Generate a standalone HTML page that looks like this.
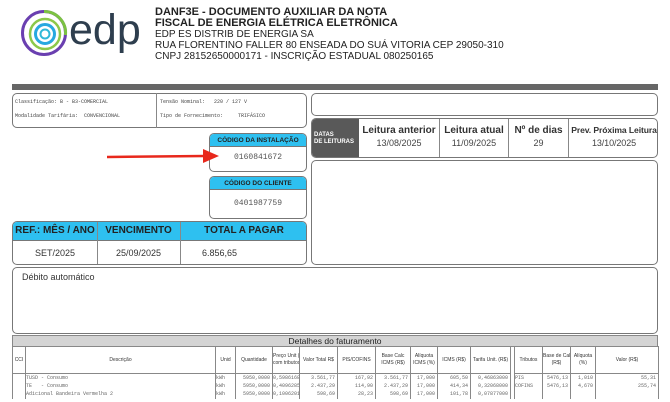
<!DOCTYPE html>
<html><head><meta charset="utf-8"><style>
*{margin:0;padding:0;box-sizing:border-box}
body{width:670px;height:402px;overflow:hidden;background:#fff;font-family:"Liberation Sans",sans-serif;color:#333;position:relative}
.a{position:absolute}
.box{position:absolute;border:1px solid #777;border-radius:5px}
.mono{font-family:"Liberation Mono",monospace}
.blue{background:#2ec0f0}
table{border-collapse:collapse;table-layout:fixed;position:absolute;left:12px;top:346px;width:646px}
td{border:1px solid #888;font-size:5px;text-align:center;overflow:hidden;white-space:nowrap;line-height:7px}
.r td{font-family:"Liberation Mono",monospace;font-size:5px;color:#666;height:8.5px;text-align:right;padding-right:2px;border-top:none;border-bottom:none}
</style></head><body>
<svg class="a" style="left:20px;top:9px" width="48" height="48" viewBox="0 0 48 48">
<circle cx="24" cy="24" r="21.5" fill="none" stroke="#6a3fb0" stroke-width="3"/>
<path d="M24 2.5 A21.5 21.5 0 0 1 45.5 26" fill="none" stroke="#7cc242" stroke-width="3"/>
<circle cx="25" cy="25" r="15" fill="none" stroke="#8cc84a" stroke-width="2.5"/>
<circle cx="25" cy="25" r="9.5" fill="none" stroke="#28a8e0" stroke-width="3"/>
<circle cx="25" cy="25" r="4.5" fill="none" stroke="#30b8d8" stroke-width="2"/>
</svg>
<div class="a" style="left:69px;top:9px;font-size:43px;line-height:43px;color:#2e3e4e;letter-spacing:0px">edp</div>
<div class="a" style="left:155px;top:7px;font-size:11px;line-height:11px;color:#222">
<b>DANF3E - DOCUMENTO AUXILIAR DA NOTA</b><br><b>FISCAL DE ENERGIA ELÉTRICA ELETRÔNICA</b><br>
<span style="font-size:10px">EDP ES DISTRIB DE ENERGIA SA<br>RUA FLORENTINO FALLER 80 ENSEADA DO SUÁ VITORIA CEP 29050-310<br>CNPJ 28152650000171 - INSCRIÇÃO ESTADUAL 080250165</span></div>
<div class="a" style="left:12px;top:84px;width:646px;height:6px;background:#666"></div>
<div class="box" style="left:12px;top:93px;width:295px;height:35px"></div>
<div class="a" style="left:156px;top:93px;width:1px;height:35px;background:#888"></div>
<div class="a mono" style="left:15px;top:99px;font-size:5px;color:#444">Classificação: B - B3-COMERCIAL</div>
<div class="a mono" style="left:15px;top:113px;font-size:5px;color:#444">Modalidade Tarifária:&nbsp;&nbsp;CONVENCIONAL</div>
<div class="a mono" style="left:160px;top:99px;font-size:5px;color:#444">Tensão Nominal:&nbsp;&nbsp;&nbsp;220 / 127 V</div>
<div class="a mono" style="left:160px;top:113px;font-size:5px;color:#444">Tipo de Fornecimento:&nbsp;&nbsp;&nbsp;&nbsp;&nbsp;TRIFÁSICO</div>
<div class="box" style="left:311px;top:93px;width:347px;height:23px"></div>
<div class="box" style="left:311px;top:118px;width:347px;height:40px;overflow:hidden;white-space:nowrap">
<div class="a" style="left:0;top:0;width:47px;height:40px;background:#595959;color:#fff;font-size:6px;font-weight:bold;padding:13px 0 0 2px;line-height:7px">DATAS<br>DE LEITURAS</div>
<div class="a" style="left:47px;width:80px;top:0;padding-top:5px;text-align:center;font-size:10px;font-weight:bold;line-height:13px">Leitura anterior<br><span style="font-weight:normal;font-size:9px;color:#444">13/08/2025</span></div>
<div class="a" style="left:127px;width:69px;text-align:center;font-size:10px;font-weight:bold;line-height:13px;border-left:1px solid #888;height:40px;top:0;padding-top:5px">Leitura atual<br><span style="font-weight:normal;font-size:9px;color:#444">11/09/2025</span></div>
<div class="a" style="left:196px;width:60px;text-align:center;font-size:10px;font-weight:bold;line-height:13px;border-left:1px solid #888;height:40px;top:0;padding-top:5px">Nº de dias<br><span style="font-weight:normal;font-size:9px;color:#444">29</span></div>
<div class="a" style="left:256px;width:91px;text-align:center;font-size:8.6px;font-weight:bold;line-height:13px;border-left:1px solid #888;height:40px;top:0;padding-top:5px;letter-spacing:-0.1px">Prev. Próxima Leitura<br><span style="font-weight:normal;font-size:9px;color:#444">13/10/2025</span></div>
</div>
<div class="box" style="left:311px;top:160px;width:347px;height:105px"></div>
<div class="box" style="left:209px;top:133px;width:98px;height:39px;overflow:hidden"><div class="blue" style="height:13px;border-bottom:1px solid #777;font-size:6.5px;font-weight:bold;text-align:center;line-height:13px;color:#222">CÓDIGO DA INSTALAÇÃO</div><div class="mono" style="text-align:center;font-size:8px;margin-top:6px;color:#555">0160841672</div></div>
<div class="box" style="left:209px;top:176px;width:98px;height:43px;overflow:hidden"><div class="blue" style="height:13px;border-bottom:1px solid #777;font-size:6.5px;font-weight:bold;text-align:center;line-height:13px;color:#222">CÓDIGO DO CLIENTE</div><div class="mono" style="text-align:center;font-size:8px;margin-top:9px;color:#555">0401987759</div></div>
<svg class="a" style="left:105px;top:148px" width="115" height="18"><line x1="2" y1="9" x2="100" y2="8" stroke="#e8281c" stroke-width="2.5"/><polygon points="98,1 114,8 98,15" fill="#e8281c"/></svg>
<div class="box" style="left:12px;top:221px;width:295px;height:44px;overflow:hidden">
<div class="blue" style="height:19px;border-bottom:1px solid #777"></div>
<div class="a" style="left:84px;top:0;width:1px;height:44px;background:#888"></div>
<div class="a" style="left:167px;top:0;width:1px;height:44px;background:#888"></div>
<div class="a" style="left:0;width:84px;top:3px;text-align:center;font-size:10px;font-weight:bold;color:#222">REF.: MÊS / ANO</div>
<div class="a" style="left:84px;width:83px;top:3px;text-align:center;font-size:10px;font-weight:bold;color:#222">VENCIMENTO</div>
<div class="a" style="left:167px;width:128px;top:3px;text-align:center;font-size:10px;font-weight:bold;color:#222">TOTAL A PAGAR</div>
<div class="a" style="left:0;width:84px;top:26px;text-align:center;font-size:9px">SET/2025</div>
<div class="a" style="left:84px;width:83px;top:26px;text-align:center;font-size:9px">25/09/2025</div>
<div class="a" style="left:189px;top:26px;font-size:9px">6.856,65</div>
</div>
<div class="box" style="left:12px;top:267px;width:646px;height:67px"><div style="font-size:9px;margin:4px 0 0 9px">Débito automático</div></div>
<div class="a" style="left:12px;top:335px;width:646px;height:12px;background:#d4d4d4;border:1px solid #888;text-align:center;font-size:8.5px;line-height:10px;color:#222">Detalhes do faturamento</div>
<table>
<colgroup><col style="width:13px"><col style="width:190px"><col style="width:20px"><col style="width:37px"><col style="width:27px"><col style="width:38px"><col style="width:38px"><col style="width:35px"><col style="width:27px"><col style="width:33px"><col style="width:40px"><col style="width:4px"><col style="width:28px"><col style="width:28px"><col style="width:25px"><col style="width:63px"></colgroup>
<tr style="height:27px"><td>CCI</td><td>Descrição</td><td>Unid</td><td>Quantidade</td><td>Preço Unit (R$)<br>com tributos</td><td>Valor Total R$</td><td>PIS/COFINS</td><td>Base Calc<br>ICMS (R$)</td><td>Alíquota<br>ICMS (%)</td><td>ICMS (R$)</td><td>Tarifa Unit. (R$)</td><td style="border-top:none;border-bottom:none"></td><td>Tributos</td><td>Base de Calc.<br>(R$)</td><td>Alíquota<br>(%)</td><td>Valor (R$)</td></tr>
<tr class="r"><td></td><td style="text-align:left">TUSD - Consumo</td><td style="text-align:left">kWh</td><td>5950,0000</td><td>0,59861681</td><td>3.561,77</td><td>167,92</td><td>3.561,77</td><td>17,000</td><td>605,50</td><td>0,46863000</td><td></td><td style="text-align:left">PIS</td><td>5476,13</td><td>1,010</td><td>55,31</td></tr>
<tr class="r"><td></td><td style="text-align:left">TE&nbsp;&nbsp; - Consumo</td><td style="text-align:left">kWh</td><td>5950,0000</td><td>0,40962857</td><td>2.437,29</td><td>114,90</td><td>2.437,29</td><td>17,000</td><td>414,34</td><td>0,32068000</td><td></td><td style="text-align:left">COFINS</td><td>5476,13</td><td>4,670</td><td>255,74</td></tr>
<tr class="r"><td></td><td style="text-align:left">Adicional Bandeira Vermelha 2</td><td style="text-align:left">kWh</td><td>5950,0000</td><td>0,10062017</td><td>598,69</td><td>28,23</td><td>598,69</td><td>17,000</td><td>101,78</td><td>0,07877000</td><td></td><td></td><td></td><td></td><td></td></tr>
</table>
</body></html>
